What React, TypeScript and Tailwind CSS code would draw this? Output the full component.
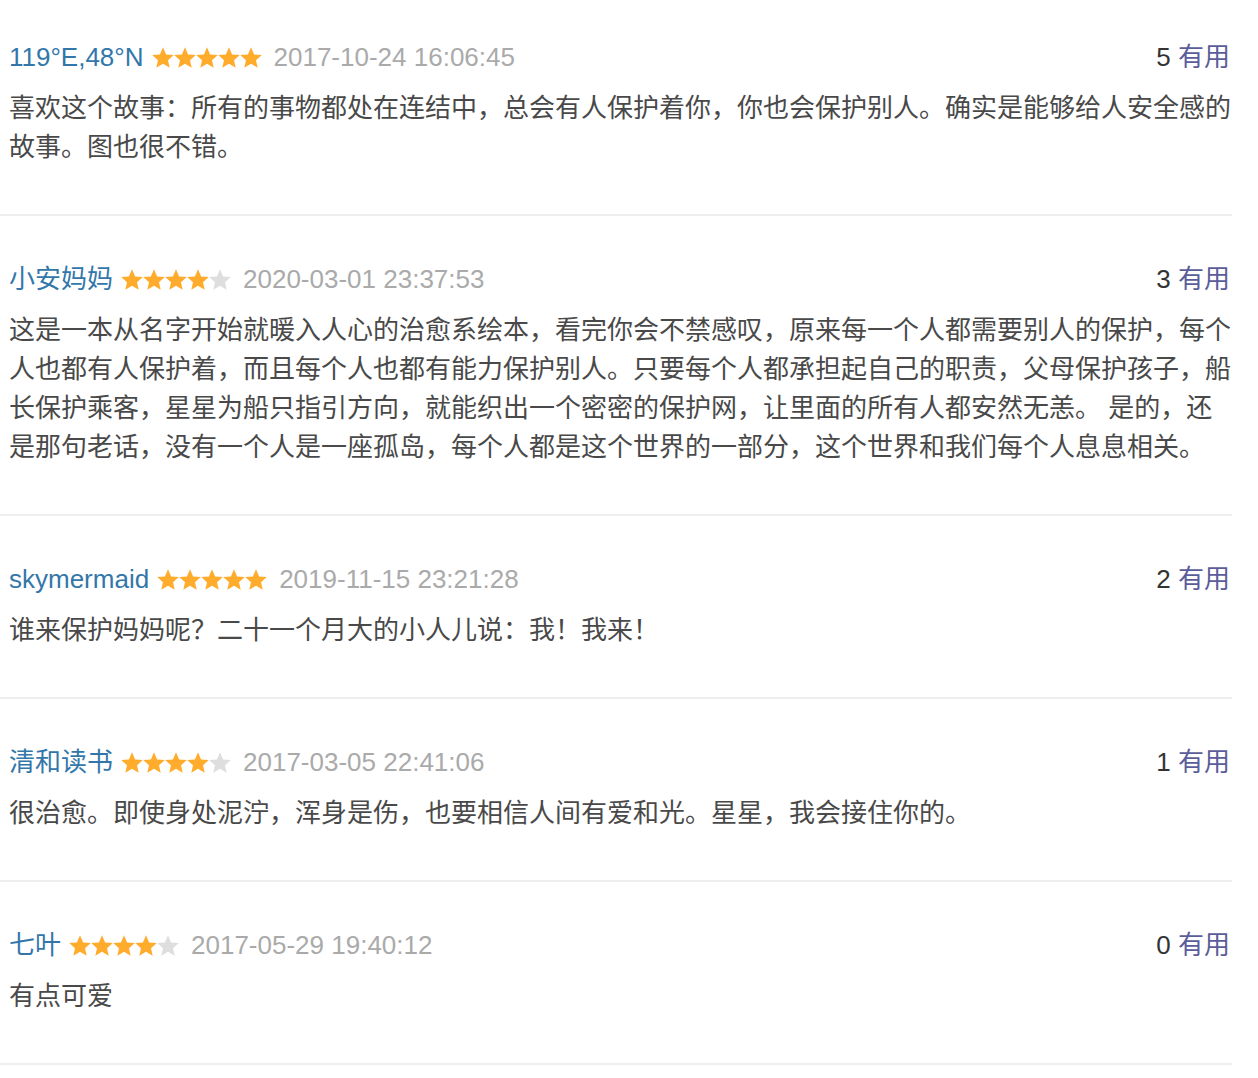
const reviews = [
  {
    name: "119°E,48°N",
    stars: 5,
    time: "2017-10-24 16:06:45",
    votes: 5,
    text: "喜欢这个故事：所有的事物都处在连结中，总会有人保护着你，你也会保护别人。确实是能够给人安全感的故事。图也很不错。",
  },
  {
    name: "小安妈妈",
    stars: 4,
    time: "2020-03-01 23:37:53",
    votes: 3,
    text: "这是一本从名字开始就暖入人心的治愈系绘本，看完你会不禁感叹，原来每一个人都需要别人的保护，每个人也都有人保护着，而且每个人也都有能力保护别人。只要每个人都承担起自己的职责，父母保护孩子，船长保护乘客，星星为船只指引方向，就能织出一个密密的保护网，让里面的所有人都安然无恙。 是的，还是那句老话，没有一个人是一座孤岛，每个人都是这个世界的一部分，这个世界和我们每个人息息相关。",
  },
  {
    name: "skymermaid",
    stars: 5,
    time: "2019-11-15 23:21:28",
    votes: 2,
    text: "谁来保护妈妈呢？二十一个月大的小人儿说：我！我来！",
  },
  {
    name: "清和读书",
    stars: 4,
    time: "2017-03-05 22:41:06",
    votes: 1,
    text: "很治愈。即使身处泥泞，浑身是伤，也要相信人间有爱和光。星星，我会接住你的。",
  },
  {
    name: "七叶",
    stars: 4,
    time: "2017-05-29 19:40:12",
    votes: 0,
    text: "有点可爱",
  },
];

const Star = ({ on }: { on: boolean }) => (
  <svg width="22" height="21" viewBox="1 1.2 22 21" className="shrink-0">
    <path
      d="M12 1.5l3.1 7.1 7.7.7-5.8 5.1 1.7 7.6L12 18l-6.7 4 1.7-7.6-5.8-5.1 7.7-.7z"
      fill={on ? "#ffac2d" : "#dedede"}
    />
  </svg>
);

const App = () => {
  return (
    <div
      className="w-[1258px] bg-white text-[26px] leading-[39px]"
      style={{ fontFamily: '"Liberation Sans", "Noto Sans CJK SC", sans-serif' }}
    >
      <div className="w-[1232px]">
        {reviews.map((r, i) => (
          <div
            key={i}
            className={`border-b-2 border-[#eeeeee] pl-[9px] pb-[47px] ${
              i === 0 ? "pt-[38px]" : "pt-[44px]"
            }`}
          >
            <div className="flex items-center justify-between">
              <div className="flex items-center">
                <span className="text-[#3377aa]">{r.name}</span>
                <span className="ml-[8px] flex">
                  {[0, 1, 2, 3, 4].map((s) => (
                    <Star key={s} on={s < r.stars} />
                  ))}
                </span>
                <span className="ml-[12px] text-[#aaaaaa]">{r.time}</span>
              </div>
              <div className="mr-[2px]">
                <span className="text-[#333333]">{r.votes}</span>{" "}
                <span className="text-[#5b5d9b]">有用</span>
              </div>
            </div>
            <p className="mt-[12px] text-[#494949]">{r.text}</p>
          </div>
        ))}
      </div>
    </div>
  );
};

export default App;
